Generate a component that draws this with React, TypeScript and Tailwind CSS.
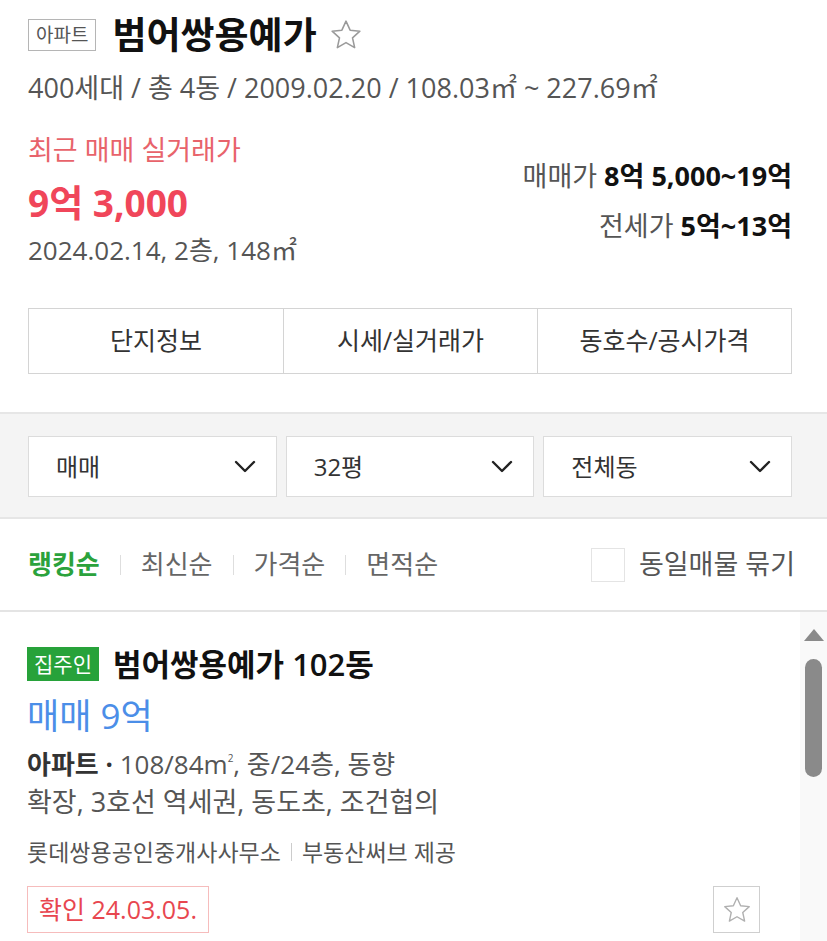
import { ReactNode } from 'react'

const FONT = { fontFamily: '"Open Sans", "Noto Sans CJK KR", sans-serif' }

function StarOutline({ size, color }: { size: number; color: string }) {
  return (
    <svg width={size} height={size} viewBox="0 0 24 24" fill="none">
      <path
        d="M12 2.2l2.9 6.4 6.9.7-5.2 4.7 1.5 6.9L12 17.4l-6.1 3.5 1.5-6.9-5.2-4.7 6.9-.7z"
        stroke={color}
        strokeWidth="1.1"
        strokeLinejoin="round"
      />
    </svg>
  )
}

function Chevron() {
  return (
    <svg width="22" height="13" viewBox="0 0 22 13" fill="none">
      <polyline points="2,2 11,11 20,2" stroke="#222" strokeWidth="2.4" strokeLinecap="round" strokeLinejoin="round" />
    </svg>
  )
}

function Select({ label }: { label: string }) {
  return (
    <div className="flex h-[61px] items-center justify-between border border-[#dcdcdc] bg-white pl-[27px] pr-[20px]">
      <span className="text-[24px] text-[#333]">{label}</span>
      <Chevron />
    </div>
  )
}

function SortItem({ children, active }: { children: ReactNode; active?: boolean }) {
  return (
    <span className={active ? 'text-[26px] font-bold text-[#2ba23c]' : 'text-[26px] text-[#666]'}>{children}</span>
  )
}

function Divider() {
  return <span className="mx-[20px] h-[20px] w-px bg-[#dedede]" />
}

export default function App() {
  return (
    <div className="relative h-[941px] w-[827px] overflow-hidden bg-white" style={FONT}>
      {/* Complex header */}
      <section className="pl-[28px] pr-[35px] pt-[15px]">
        <div className="flex h-[40px] items-center">
          <span className="flex h-[32px] items-center border border-[#b5b5b5] px-[7px] text-[19px] leading-none text-[#555]">
            아파트
          </span>
          <h1 className="ml-[16px] text-[37px] font-semibold leading-[40px] text-[#111]">범어쌍용예가</h1>
          <span className="ml-[12px] flex">
            <StarOutline size={34} color="#9a9a9a" />
          </span>
        </div>
        <p className="mt-[15px] text-[27px] leading-[36px] text-[#555]">
          400세대 / 총 4동 / 2009.02.20 / 108.03㎡ ~ 227.69㎡
        </p>

        <div className="mt-[26px] flex justify-between">
          <div>
            <div className="text-[27px] leading-[36px] text-[#e8636b]">최근 매매 실거래가</div>
            <div className="mt-[12px] text-[37px] font-bold leading-[46px] text-[#f0465a]">9억 3,000</div>
            <div className="mt-[6px] text-[26px] leading-[36px] text-[#555]">2024.02.14, 2층, 148㎡</div>
          </div>
          <div className="flex flex-col items-end pt-[26px]">
            <div className="text-[27px] leading-[36px] text-[#555]">
              매매가 <b className="font-bold text-[#111]">8억 5,000~19억</b>
            </div>
            <div className="mt-[14px] text-[27px] leading-[36px] text-[#555]">
              전세가 <b className="font-bold text-[#111]">5억~13억</b>
            </div>
          </div>
        </div>

        <div className="mt-[40px] grid h-[66px] grid-cols-3 border border-[#d4d4d4]">
          <div className="flex items-center justify-center text-[25px] text-[#333]">단지정보</div>
          <div className="flex items-center justify-center border-l border-[#d4d4d4] text-[25px] text-[#333]">시세/실거래가</div>
          <div className="flex items-center justify-center border-l border-[#d4d4d4] text-[25px] text-[#333]">동호수/공시가격</div>
        </div>
      </section>

      {/* Filters */}
      <div className="mt-[38px] grid grid-cols-3 gap-[9px] border-y-2 border-[#e6e6e6] bg-[#f4f4f4] pb-[20px] pl-[28px] pr-[35px] pt-[22px]">
        <Select label="매매" />
        <Select label="32평" />
        <Select label="전체동" />
      </div>

      {/* Sorting */}
      <div className="flex h-[93px] items-center justify-between border-b-2 border-[#e4e4e4] pl-[28px] pr-[32px]">
        <div className="flex items-center">
          <SortItem active>랭킹순</SortItem>
          <Divider />
          <SortItem>최신순</SortItem>
          <Divider />
          <SortItem>가격순</SortItem>
          <Divider />
          <SortItem>면적순</SortItem>
        </div>
        <label className="flex items-center">
          <span className="h-[34px] w-[34px] border border-[#e4e4e4] bg-white" />
          <span className="ml-[14px] text-[27px] text-[#555]">동일매물 묶기</span>
        </label>
      </div>

      {/* Listing */}
      <div className="flex">
        <article className="flex-1 pl-[27px] pr-[40px] pt-[35px]">
          <div className="flex h-[34px] items-center">
            <span className="flex h-[34px] items-center bg-[#27a23a] px-[7px] text-[21px] leading-none text-white">
              집주인
            </span>
            <h2 className="ml-[14px] text-[31px] font-semibold leading-[38px] text-[#111]">범어쌍용예가 102동</h2>
          </div>
          <div className="mt-[13px] text-[35px] leading-[44px] text-[#4b8ee8]">매매 9억</div>
          <div className="mt-[7px] text-[26px] leading-[38px] text-[#555]">
            <b className="font-bold text-[#333]">아파트 ·</b> 108/84m
            <sup className="relative -top-[12px] text-[10px]">2</sup>, 중/24층, 동향
          </div>
          <div className="text-[27px] leading-[38px] text-[#555]">확장, 3호선 역세권, 동도초, 조건협의</div>
          <div className="mt-[16px] flex h-[30px] items-center text-[23px] text-[#555]">
            롯데쌍용공인중개사사무소
            <span className="mx-[10px] h-[18px] w-px bg-[#ccc]" />
            부동산써브 제공
          </div>
          <div className="mt-[19px] flex items-center justify-between">
            <span className="flex h-[47px] items-center border border-[#f6bcbc] px-[11px] text-[25px] text-[#e8464f]">
              확인 24.03.05.
            </span>
            <span className="flex h-[47px] w-[47px] items-center justify-center border border-[#cfcfcf] bg-white">
              <StarOutline size={30} color="#b0b0b0" />
            </span>
          </div>
        </article>

        {/* scrollbar */}
        <div className="flex h-[330px] w-[27px] flex-col items-center bg-[#f9f9f9] pt-[17px]">
          <svg width="20" height="12" viewBox="0 0 20 12">
            <polygon points="10,0 20,12 0,12" fill="#8a8a8a" />
          </svg>
          <div className="mt-[18px] h-[118px] w-[17px] rounded-full bg-[#8a8a8a]" />
        </div>
      </div>
    </div>
  )
}
